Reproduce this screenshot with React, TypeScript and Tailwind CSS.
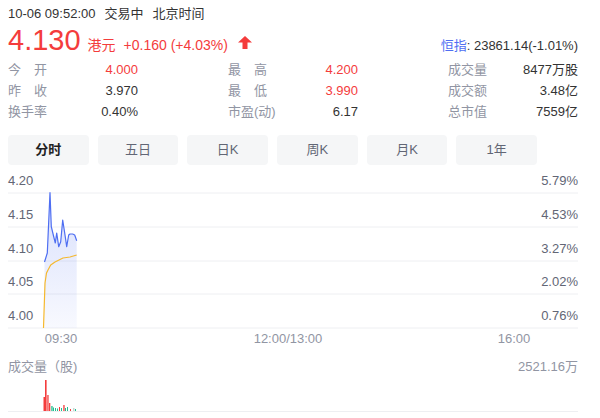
import React from "react";

const RED = "#f43c3c";
const BLUE = "#4e6ef2";

const font = { fontFamily: '"Liberation Sans", Arial, "Noto Sans CJK SC", sans-serif' };

function Stat({ label, value, red }: { label: string[]; value: string; red?: boolean }) {
  return (
    <div className="flex w-[130px] items-center justify-between">
      <div className="flex w-[39px] justify-between text-[#9195a3]">
        {label.map((c, i) => (
          <span key={i}>{c}</span>
        ))}
      </div>
      <span className={red ? "text-[#f43c3c]" : "text-[#333]"}>{value}</span>
    </div>
  );
}

function Stat2({ label, value, red }: { label: string; value: string; red?: boolean }) {
  return (
    <div className="flex w-[130px] items-center justify-between">
      <span className="text-[#9195a3]">{label}</span>
      <span className={red ? "text-[#f43c3c]" : "text-[#333]"}>{value}</span>
    </div>
  );
}

const blue: [number, number][] = [
  [44.5, 92], [47.3, 83], [50, 22.7], [51.3, 56.7], [53.3, 65], [55.3, 73], [56.7, 63],
  [58.7, 76.7], [60.7, 71.7], [62.7, 50], [64.7, 63], [66.7, 76.7], [68.7, 65], [70, 64],
  [72.7, 64], [74.7, 65], [76.7, 70.7],
];
const yellow: [number, number][] = [
  [43.5, 158], [45, 113], [46.5, 103], [48, 100], [50.7, 95], [55, 92], [63, 88], [70, 87], [76.7, 85],
];

const bars: { x: number; w: number; top: number; c: string }[] = [
  { x: 43.5, w: 1.5, top: 397, c: RED },
  { x: 45, w: 1.6, top: 380, c: RED },
  { x: 47.3, w: 1.3, top: 395, c: RED },
  { x: 49, w: 1.3, top: 403, c: RED },
  { x: 51.3, w: 1.3, top: 406, c: "#1fbf8f" },
  { x: 53, w: 1, top: 407.5, c: "#1fbf8f" },
  { x: 55, w: 1, top: 408, c: "#1fbf8f" },
  { x: 57, w: 1, top: 408.5, c: "#1fbf8f" },
  { x: 59, w: 1, top: 407, c: RED },
  { x: 61, w: 1, top: 408, c: "#1fbf8f" },
  { x: 63.3, w: 1.3, top: 405, c: RED },
  { x: 65, w: 1, top: 408, c: "#1fbf8f" },
  { x: 67, w: 1, top: 407, c: "#1fbf8f" },
  { x: 70, w: 1, top: 409, c: RED },
  { x: 73, w: 1.5, top: 408, c: "#c9d6d2" },
  { x: 75, w: 1, top: 409, c: "#1fbf8f" },
];

export default function App() {
  const pts = (a: [number, number][]) => a.map((p) => p.join(",")).join(" ");
  const fill = pts(blue) + " 76.7,158 44.5,158";
  const gridY = [23, 57, 91, 124, 158];
  const leftL = ["4.20", "4.15", "4.10", "4.05", "4.00"];
  const rightL = ["5.79%", "4.53%", "3.27%", "2.02%", "0.76%"];
  return (
    <div className="w-[600px] h-[418px] bg-white overflow-hidden" style={font}>
      {/* header line 1 */}
      <div className="flex gap-[9px] px-2 pt-[4px] h-[24px] text-[13px] leading-[20px] text-[#333]">
        <span>10-06 09:52:00</span>
        <span>交易中</span>
        <span>北京时间</span>
      </div>
      {/* header line 2 */}
      <div className="flex items-baseline px-2 h-[32px] leading-[32px]">
        <span className="text-[29px] text-[#f43c3c]">4.130</span>
        <span className="ml-[7px] text-[14px] text-[#f43c3c]">港元</span>
        <span className="ml-[8px] text-[14px] text-[#f43c3c]">+0.160 (+4.03%)</span>
        <svg className="ml-[10px] self-center mt-[5px]" width="14" height="13" viewBox="0 0 14 13">
          <polygon points="7,0 14,6.5 9.5,6.5 9.5,13 4.5,13 4.5,6.5 0,6.5" fill={RED} />
        </svg>
        <span className="ml-auto mr-[14px] text-[13px] text-[#333]">
          <span className="text-[#4e6ef2]">恒指</span>: 23861.14(-1.01%)
        </span>
      </div>
      {/* stats */}
      <div className="flex gap-[90px] px-2 pt-[3px] text-[13px] leading-[21px]">
        <div className="flex flex-col">
          <Stat label={["今", "开"]} value="4.000" red />
          <Stat label={["昨", "收"]} value="3.970" />
          <Stat2 label="换手率" value="0.40%" />
        </div>
        <div className="flex flex-col">
          <Stat label={["最", "高"]} value="4.200" red />
          <Stat label={["最", "低"]} value="3.990" red />
          <Stat2 label="市盈(动)" value="6.17" />
        </div>
        <div className="flex flex-col">
          <Stat2 label="成交量" value="8477万股" />
          <Stat2 label="成交额" value="3.48亿" />
          <Stat2 label="总市值" value="7559亿" />
        </div>
      </div>
      {/* tabs */}
      <div className="px-2 pt-[13px]">
        <div className="flex w-[529px] gap-[9px] text-[13px]">
          {["分时", "五日", "日K", "周K", "月K", "1年"].map((t, i) => (
            <div
              key={t}
              className={
                "flex h-[30px] flex-1 items-center justify-center rounded-[4px] bg-[#f5f6f7] " +
                (i === 0 ? "font-bold text-[#222]" : "text-[#626675]")
              }
            >
              {t}
            </div>
          ))}
        </div>
      </div>
      {/* chart */}
      <svg width="600" height="182" className="mt-[5px] block" style={font}>
        <defs>
          <linearGradient id="g" x1="0" y1="0" x2="0" y2="1">
            <stop offset="0" stopColor={BLUE} stopOpacity="0.22" />
            <stop offset="1" stopColor={BLUE} stopOpacity="0.04" />
          </linearGradient>
        </defs>
        {gridY.map((y, i) => (
          <g key={i}>
            <line x1="8" x2="578" y1={y} y2={y} stroke="#eeeff2" strokeWidth="1" />
            <text x="8" y={y - 11} fontSize="13" fill="#626675" dominantBaseline="middle">
              {leftL[i]}
            </text>
            <text x="578" y={y - 11} fontSize="13" fill="#626675" textAnchor="end" dominantBaseline="middle">
              {rightL[i]}
            </text>
          </g>
        ))}
        <polygon points={fill} fill="url(#g)" />
        <polyline points={pts(blue)} fill="none" stroke={BLUE} strokeWidth="1.2" strokeLinejoin="round" />
        <polyline points={pts(yellow)} fill="none" stroke="#f5b82e" strokeWidth="1.2" strokeLinejoin="round" />
        <text x="61" y="170" fontSize="13" fill="#9195a3" textAnchor="middle" dominantBaseline="middle">09:30</text>
        <text x="288" y="170" fontSize="13" fill="#9195a3" textAnchor="middle" dominantBaseline="middle">12:00/13:00</text>
        <text x="514" y="170" fontSize="13" fill="#9195a3" textAnchor="middle" dominantBaseline="middle">16:00</text>
      </svg>
      {/* volume */}
      <div className="flex justify-between px-2 pr-[22px] h-[20px] mt-[5px] text-[13px] leading-[20px] text-[#9195a3]">
        <span>成交量（股)</span>
        <span>2521.16万</span>
      </div>
      <svg width="600" height="40" className="block" >
        {bars.map((b, i) => (
          <rect key={i} x={b.x} y={b.top - 377} width={b.w} height={411 - b.top} fill={b.c} />
        ))}
        <line x1="8" x2="578" y1="34.5" y2="34.5" stroke="#eeeff2" strokeWidth="1" />
      </svg>
    </div>
  );
}
